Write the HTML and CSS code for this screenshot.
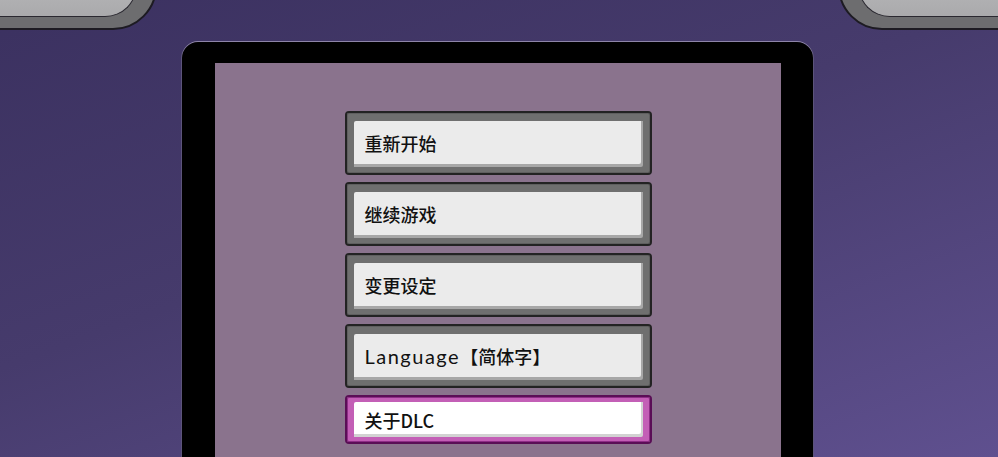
FILE: index.html
```html
<!DOCTYPE html>
<html lang="zh-CN">
<head>
<meta charset="utf-8">
<title>菜单</title>
<link rel="stylesheet" href="styles.css">
</head>
<body>
<div class="scene">
  <div class="bezel bezel-left"><div class="bezel-face"></div></div>
  <div class="bezel bezel-right"><div class="bezel-face"></div></div>

  <div class="device">
    <div class="screen">
      <nav class="menu">
        <button class="item">重新开始</button>
        <button class="item">继续游戏</button>
        <button class="item">变更设定</button>
        <button class="item"><span class="latin">Language</span>【简体字】</button>
        <button class="item active">关于DLC</button>
      </nav>
    </div>
  </div>
</div>
</body>
</html>
```
FILE: styles.css
```css
* { box-sizing: border-box; }

html, body {
  margin: 0;
  padding: 0;
  width: 998px;
  height: 457px;
  overflow: hidden;
}

body {
  font-family: "Noto Sans CJK SC", "Noto Sans", sans-serif;
}

.scene {
  position: relative;
  width: 998px;
  height: 457px;
  overflow: hidden;
  background: linear-gradient(160deg, #3b3160 0%, #463b6c 45%, #5f508f 100%);
  padding-top: 42px;
}

/* grey bezels peeking in from the top corners */
.bezel {
  position: absolute;
  top: -40px;
  height: 70px;
  background: #6d6d6f;
  border: 2px solid #1d1b22;
}
.bezel-left {
  left: -30px;
  width: 187px;
  border-radius: 0 0 44px 0;
  padding: 0 18px 11px 0;
}
.bezel-right {
  right: -30px;
  width: 190px;
  border-radius: 0 0 0 44px;
  padding: 0 0 11px 18px;
}
.bezel-face {
  width: 100%;
  height: 100%;
  background: linear-gradient(180deg, #bdbdbf 0%, #aaaaac 100%);
  border: 1px solid #2a2830;
  border-top: 0;
}
.bezel-left .bezel-face {
  border-left: 0;
  border-radius: 0 0 32px 0;
}
.bezel-right .bezel-face {
  border-right: 0;
  border-radius: 0 0 0 32px;
}

/* handheld frame */
.device {
  margin-left: 182px;
  width: 631px;
  height: 440px;
  background: #000;
  border-radius: 16px 16px 0 0;
  box-shadow: 0 -1px 0 #8d84a8, -1px 0 0 #5c547a, 1px 0 0 #5c547a;
  padding: 21px 32px 0 33px;
}

.screen {
  height: 100%;
  background: #8a738d;
  padding-top: 48px;
}

.menu {
  display: flex;
  flex-direction: column;
  align-items: center;
  gap: 7px;
}

/* pixel-style menu buttons */
.item {
  display: flex;
  align-items: center;
  width: 307px;
  height: 64px;
  margin: 0;
  padding: 0 0 1px 18px;
  font-family: "Noto Sans CJK SC", "Noto Sans", sans-serif;
  font-size: 18px;
  font-weight: 500;
  color: #111;
  text-align: left;
  background: #ebebeb;
  border: 2px solid #232323;
  border-radius: 4px;
  box-shadow:
    inset 0 0 0 1px #5f5f5f,
    inset 7px 8px 0 #6f6f6f,
    inset -7px -6px 0 #6f6f6f,
    inset -9px -9px 0 #a7a7a7;
  outline: none;
  cursor: pointer;
}

.item .latin {
  font-family: Lato, "Noto Sans", sans-serif;
  font-weight: 400;
  font-size: 20px;
  letter-spacing: 1.5px;
}

/* the highlighted entry sits lower and slimmer */
.item.active {
  height: 49px;
  padding-bottom: 0;
  background: #ffffff;
  border-color: #5a0e56;
  box-shadow:
    inset 0 0 0 1px #8e2c86,
    inset 7px 5px 0 #c35fb6,
    inset -7px -5px 0 #c35fb6,
    inset -9px -8px 0 #d2d2d2;
}
```
